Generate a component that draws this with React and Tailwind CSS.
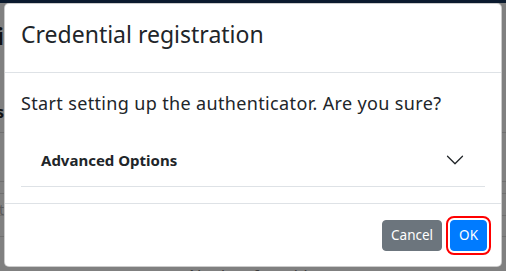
const BodyFont = "font-['Segoe_UI','Noto_Sans',sans-serif]";

function ChevronIcon() {
    return (
        <svg viewBox="0 0 16 16" className="h-5 w-5 shrink-0 fill-[#212529]">
            <path fillRule="evenodd" d="M1.646 4.646a.5.5 0 0 1 .708 0L8 10.293l5.646-5.647a.5.5 0 0 1 .708.708l-6 6a.5.5 0 0 1-.708 0l-6-6a.5.5 0 0 1 0-.708z" />
        </svg>
    );
}

function PageBehind() {
    // the page under the backdrop, already dimmed
    return (
        <div className="flex flex-col">
            <div className="h-[3px] bg-[#0b1a2e]" />
            <div className="h-[130px] border-b border-[#6f6f6f]">
                <div className="flex w-[4px] justify-end whitespace-nowrap pt-[15px] text-2xl font-bold leading-9 text-[#111]">Multi</div>
                <div className="mt-[46px] flex w-[4px] justify-end whitespace-nowrap text-base font-bold leading-6 text-[#111]">Authenticators</div>
            </div>
            <div className="h-[49px] border-b border-[#6f6f6f]" />
            <div className="h-[12px] border-b border-[#6f6f6f]" />
            <div className="h-[22px] border-b border-[#6f6f6f]">
                <div className="flex w-[4px] justify-end whitespace-nowrap pt-[6px] text-sm leading-5 text-[#5a5a5a]">List</div>
            </div>
            <div className="h-[21px] border-b border-[#6f6f6f]" />
            <p className="pt-[27px] text-center text-base leading-6 text-[#3b3b3b]">No data for table</p>
        </div>
    );
}

export default function App() {
    return (
        <div className={`relative h-[271px] w-[506px] overflow-hidden bg-[#808080] ${BodyFont}`}>
            <PageBehind />

            <div className="absolute left-[4px] top-[3px] w-[498px] rounded-[5px] border border-black/20 bg-white">
                <div className="flex items-center border-b border-[#dee2e6] px-4 pt-3 pb-5">
                    <h4 className="text-[23px] leading-9 text-[#212529]">Credential registration</h4>
                </div>

                <div className="px-4 pt-[18px] pb-4">
                    <p className="mb-[14px] text-[18px] leading-6 tracking-[0.35px] text-[#212529]">Start setting up the authenticator. Are you sure?</p>
                    <div className="border-b border-[#dee2e6]">
                        <button type="button" className="flex w-full items-center justify-between px-5 pt-[19px] pb-[14px] text-left text-[15px] font-bold leading-6 text-[#212529]">
                            Advanced Options
                            <ChevronIcon />
                        </button>
                    </div>
                </div>

                <div className="flex justify-end gap-2 border-t border-[#dee2e6] pl-3 pr-[14px] pt-4 pb-[15px]">
                    <button type="button" className="rounded-[4px] border border-[#6c757d] bg-[#6c757d] px-2 py-1 text-[13.5px] leading-[21px] text-white">Cancel</button>
                    <button type="button" className="rounded-[4px] border border-[#007bff] bg-[#007bff] px-2 py-1 text-[13.5px] leading-[21px] text-white outline-2 outline-offset-2 outline-[#ff0000]">OK</button>
                </div>
            </div>
        </div>
    );
}
